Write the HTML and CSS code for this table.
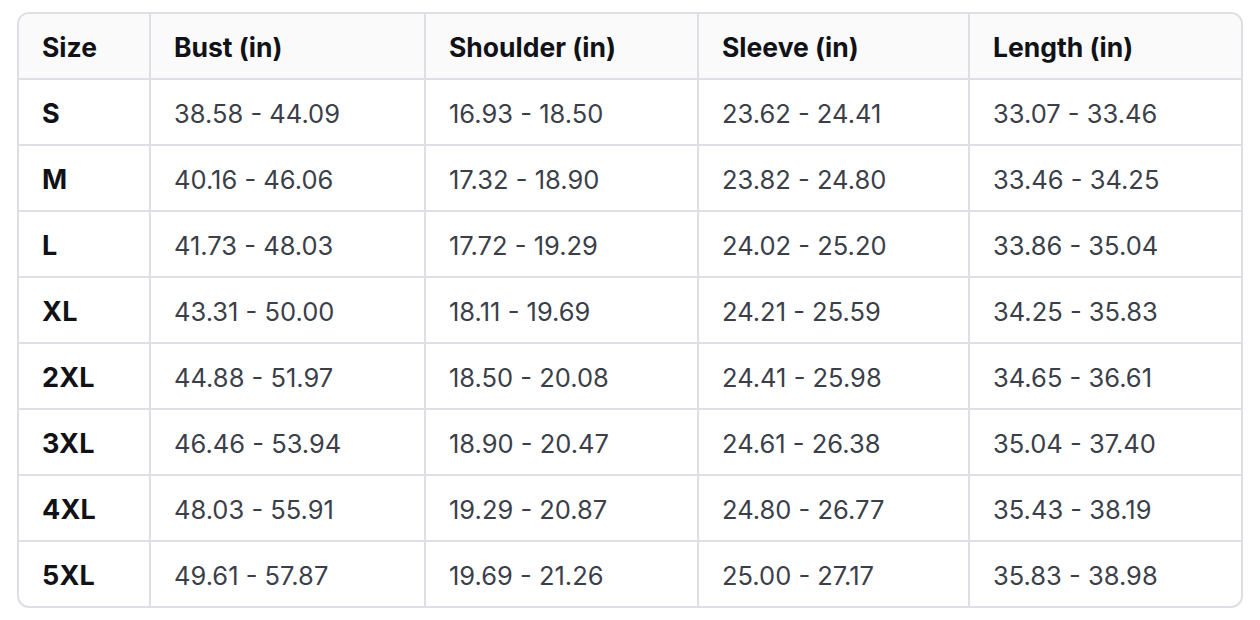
FILE: index.html
```html
<!DOCTYPE html>
<html>
<head>
<meta charset="utf-8">
<link rel="stylesheet" href="styles.css">
</head>
<body>
<div class="wrap">
<table class="chart">
<thead>
<tr><th>Size</th><th>Bust (in)</th><th>Shoulder (in)</th><th>Sleeve (in)</th><th>Length (in)</th></tr>
</thead>
<tbody>
<tr><td class="sz">S</td><td>38.58 - 44.09</td><td>16.93 - 18.50</td><td>23.62 - 24.41</td><td>33.07 - 33.46</td></tr>
<tr><td class="sz">M</td><td>40.16 - 46.06</td><td>17.32 - 18.90</td><td>23.82 - 24.80</td><td>33.46 - 34.25</td></tr>
<tr><td class="sz">L</td><td>41.73 - 48.03</td><td>17.72 - 19.29</td><td>24.02 - 25.20</td><td>33.86 - 35.04</td></tr>
<tr><td class="sz">XL</td><td>43.31 - 50.00</td><td>18.11 - 19.69</td><td>24.21 - 25.59</td><td>34.25 - 35.83</td></tr>
<tr><td class="sz">2XL</td><td>44.88 - 51.97</td><td>18.50 - 20.08</td><td>24.41 - 25.98</td><td>34.65 - 36.61</td></tr>
<tr><td class="sz">3XL</td><td>46.46 - 53.94</td><td>18.90 - 20.47</td><td>24.61 - 26.38</td><td>35.04 - 37.40</td></tr>
<tr><td class="sz">4XL</td><td>48.03 - 55.91</td><td>19.29 - 20.87</td><td>24.80 - 26.77</td><td>35.43 - 38.19</td></tr>
<tr><td class="sz">5XL</td><td>49.61 - 57.87</td><td>19.69 - 21.26</td><td>25.00 - 27.17</td><td>35.83 - 38.98</td></tr>
</tbody>
</table>
</div>
</body>
</html>
```
FILE: styles.css
```css
html, body {
  margin: 0;
  padding: 0;
  background: #ffffff;
}
body {
  font-family: Inter, "Noto Sans", sans-serif;
}
.wrap {
  padding: 12px 17px 0 17px;
}
.chart {
  width: 1226px;
  border-collapse: separate;
  border-spacing: 0;
  border: 2px solid #dedee5;
  border-radius: 12px;
  overflow: hidden;
  table-layout: fixed;
}
.chart th, .chart td {
  height: 66px;
  padding: 2px 0 0 23px;
  text-align: left;
  box-sizing: border-box;
  border-right: 2px solid #dedee5;
  border-bottom: 2px solid #dedee5;
}
.chart tr > :last-child {
  border-right: none;
}
.chart tbody tr:last-child td {
  border-bottom: none;
  height: 64px;
}
.chart th {
  background: #fafafa;
  font-size: 26.5px;
  font-weight: 650;
  color: #111217;
  letter-spacing: 0;
}
.chart td {
  font-size: 25.5px;
  font-weight: 400;
  color: #3b3f4a;
  letter-spacing: 0;
}
.chart td.sz {
  font-weight: 650;
  font-size: 27px;
  color: #111217;
  letter-spacing: 0.2px;
}
.chart th:nth-child(1) { width: 132px; }
.chart th:nth-child(2) { width: 275px; }
.chart th:nth-child(3) { width: 273px; }
.chart th:nth-child(4) { width: 271px; }
.chart th:nth-child(5) { width: auto; }
```
